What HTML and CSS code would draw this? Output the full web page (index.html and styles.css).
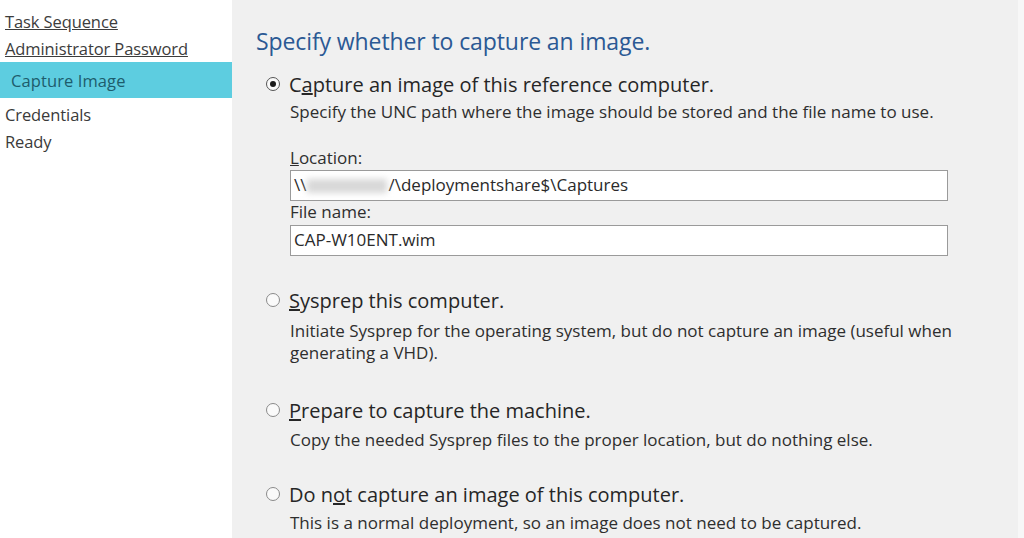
FILE: index.html
```html
<!DOCTYPE html>
<html>
<head>
<meta charset="utf-8">
<link rel="stylesheet" href="styles.css">
</head>
<body>
<div class="app">
  <nav class="sidebar">
    <div class="nav-item link">Task Sequence</div>
    <div class="nav-item link">Administrator Password</div>
    <div class="nav-item active">Capture Image</div>
    <div class="nav-item after">Credentials</div>
    <div class="nav-item">Ready</div>
  </nav>
  <main class="panel">
    <h1 class="title">Specify whether to capture an image.</h1>

    <div class="option o1">
      <div class="opt-head"><span class="radio checked"></span><span class="opt-label">C<u>a</u>pture an image of this reference computer.</span></div>
      <div class="opt-desc">Specify the UNC path where the image should be stored and the file name to use.</div>
      <div class="fields">
        <div class="field-label"><u>L</u>ocation:</div>
        <div class="input first">\\<span class="blur"></span>/\deploymentshare$\Captures</div>
        <div class="field-label">File name:</div>
        <div class="input">CAP-W10ENT.wim</div>
      </div>
    </div>

    <div class="option o2">
      <div class="opt-head"><span class="radio"></span><span class="opt-label"><u>S</u>ysprep this computer.</span></div>
      <div class="opt-desc">Initiate Sysprep for the operating system, but do not capture an image (useful when<br>generating a VHD).</div>
    </div>

    <div class="option o3">
      <div class="opt-head"><span class="radio"></span><span class="opt-label"><u>P</u>repare to capture the machine.</span></div>
      <div class="opt-desc">Copy the needed Sysprep files to the proper location, but do nothing else.</div>
    </div>

    <div class="option o4">
      <div class="opt-head"><span class="radio"></span><span class="opt-label">Do n<u>o</u>t capture an image of this computer.</span></div>
      <div class="opt-desc">This is a normal deployment, so an image does not need to be captured.</div>
    </div>
  </main>
  <div class="edge"></div>
</div>
</body>
</html>
```
FILE: styles.css
```css
* { box-sizing: border-box; }
html, body { margin: 0; padding: 0; }
body {
  width: 1024px;
  height: 538px;
  overflow: hidden;
  background: #ffffff;
  font-family: "Open Sans", "Noto Sans", sans-serif;
  color: #2a2a2a;
}
.app {
  display: flex;
  height: 538px;
}
.sidebar {
  width: 232px;
  flex: none;
  background: #ffffff;
  padding-top: 8px;
}
.nav-item {
  height: 27px;
  line-height: 27px;
  padding-left: 5px;
  font-size: 16.5px;
  color: #3a3a3a;
  letter-spacing: -0.1px;
}
.nav-item.link { text-decoration: underline; color: #3c3c3c; }
.nav-item.active {
  height: 36px;
  line-height: 38px;
  background: #5dcde0;
  color: #1d5c6c;
  padding-left: 11px;
  letter-spacing: 0.1px;
}
.nav-item.after { margin-top: 3px; }
.panel {
  flex: 1;
  background: #f0f0f0;
  padding: 23px 0 0 24px;
}
.edge {
  width: 6px;
  flex: none;
  background: #f7f7f7;
}
.title {
  margin: 0;
  font-weight: normal;
  font-size: 23px;
  line-height: 36px;
  color: #2b5994;
  letter-spacing: -0.1px;
}
.o1 { margin-top: 12px; }
.opt-head {
  display: flex;
  align-items: center;
  height: 26px;
}
.radio {
  width: 14px;
  height: 14px;
  border-radius: 50%;
  border: 1.5px solid #8a8a8a;
  background: #fafafa;
  margin: 0 9px 0 10px;
  position: relative;
  flex: none;
}
.radio.checked { border-color: #555; }
.radio.checked::after {
  content: "";
  position: absolute;
  left: 2.5px; top: 2.5px;
  width: 6px; height: 6px;
  border-radius: 50%;
  background: #1a1a1a;
}
.opt-label {
  font-size: 20px;
  color: #262626;
}
.opt-desc {
  padding-left: 34px;
  margin-top: 7px;
  font-size: 17px;
  line-height: 22px;
  color: #2e2e2e;
}
.o1 .opt-desc { margin-top: 4px; }
.o3 .opt-desc { margin-top: 6px; }
.o4 .opt-desc { margin-top: 5px; }
.fields {
  padding: 24px 0 0 34px;
  width: 692px;
}
.field-label {
  font-size: 17px;
  line-height: 22px;
  color: #2e2e2e;
}
.input {
  height: 31px;
  line-height: 28px;
  margin-top: 2px;
  border: 1.5px solid #9a9a9a;
  background: #ffffff;
  padding-left: 3px;
  font-size: 17px;
  color: #2a2a2a;
}
.input.first { margin-top: 1px; }
.blur {
  display: inline-block;
  width: 80px;
  height: 14px;
  vertical-align: middle;
  background: #d8d8d8;
  filter: blur(3px);
  margin: 0 1px;
}
.o2 { margin-top: 31px; }
.o3 { margin-top: 33px; }
.o4 { margin-top: 30px; }
```
